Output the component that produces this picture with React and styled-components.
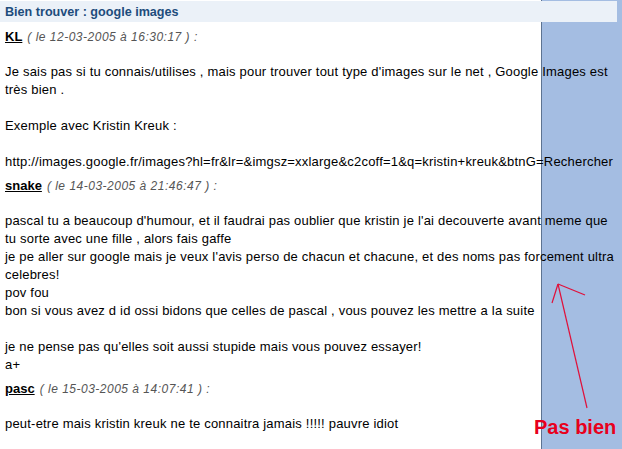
import React from 'react';
import styled, { createGlobalStyle } from 'styled-components';

const GlobalStyle = createGlobalStyle`
  html, body {
    margin: 0;
    padding: 0;
    background: #ffffff;
  }
`;

const Page = styled.div`
  position: relative;
  width: 622px;
  height: 449px;
  overflow: hidden;
  padding-top: 1px;
  box-sizing: border-box;
  background: linear-gradient(
    to right,
    #ffffff 0,
    #ffffff 541px,
    #5d7391 541px,
    #5d7391 542px,
    #a4bde2 542px
  );
  font-family: 'Liberation Sans', Arial, sans-serif;
  color: #000;
`;

const TitleBar = styled.div`
  width: 617px;
  height: 21px;
  background: #ebf1f8;
  box-sizing: border-box;
  padding-left: 5px;
  display: flex;
  align-items: center;
  font-size: 12.6px;
  font-weight: bold;
  color: #1d4c7c;
`;

const Post = styled.div`
  padding-left: 5px;
  margin-top: 5px;
`;

const Author = styled.div`
  height: 18px;
  line-height: 18px;
  white-space: nowrap;
`;

const Name = styled.span`
  font-size: 13px;
  font-weight: bold;
  text-decoration: underline;
  color: #000;
`;

const Date = styled.span`
  font-size: 12px;
  font-style: italic;
  letter-spacing: 0.5px;
  color: #555;
  margin-left: 5px;
`;

const Line = styled.div`
  height: 18px;
  line-height: 18px;
  font-size: 13px;
  letter-spacing: 0.2px;
  white-space: nowrap;
`;

const Overlay = styled.svg`
  position: absolute;
  left: 0;
  top: 0;
  pointer-events: none;
`;

const Label = styled.div`
  position: absolute;
  left: 534px;
  top: 416px;
  font-size: 20px;
  font-weight: bold;
  color: #e8001c;
  white-space: nowrap;
`;

const posts = [
  {
    name: 'KL',
    date: '( le 12-03-2005 à 16:30:17 ) :',
    lines: [
      '',
      "Je sais pas si tu connais/utilises , mais pour trouver tout type d'images sur le net , Google Images est",
      'très bien .',
      '',
      'Exemple avec Kristin Kreuk :',
      '',
      'http://images.google.fr/images?hl=fr&lr=&imgsz=xxlarge&c2coff=1&q=kristin+kreuk&btnG=Rechercher',
    ],
  },
  {
    name: 'snake',
    date: '( le 14-03-2005 à 21:46:47 ) :',
    lines: [
      '',
      "pascal tu a beaucoup d'humour, et il faudrai pas oublier que kristin je l'ai decouverte avant meme que",
      'tu sorte avec une fille , alors fais gaffe',
      "je pe aller sur google mais je veux l'avis perso de chacun et chacune, et des noms pas forcement ultra",
      'celebres!',
      'pov fou',
      'bon si vous avez d id ossi bidons que celles de pascal , vous pouvez les mettre a la suite',
      '',
      "je ne pense pas qu'elles soit aussi stupide mais vous pouvez essayer!",
      'a+',
    ],
  },
  {
    name: 'pasc',
    date: '( le 15-03-2005 à 14:07:41 ) :',
    lines: ['', 'peut-etre mais kristin kreuk ne te connaitra jamais !!!!! pauvre idiot'],
  },
];

export default function App() {
  return (
    <>
      <GlobalStyle />
      <Page>
        <TitleBar>Bien trouver : google images</TitleBar>
        {posts.map((p) => (
          <Post key={p.name}>
            <Author>
              <Name>{p.name}</Name>
              <Date>{p.date}</Date>
            </Author>
            {p.lines.map((l, i) => (
              <Line key={i}>{l || '\u00a0'}</Line>
            ))}
          </Post>
        ))}
        <Overlay width="622" height="449" viewBox="0 0 622 449">
          <g stroke="#e0103a" strokeWidth="1.2" fill="none">
            <line x1="558" y1="284" x2="587" y2="408" />
            <line x1="558" y1="284" x2="552" y2="303" />
            <line x1="558" y1="284" x2="585" y2="295" />
          </g>
        </Overlay>
        <Label>Pas bien</Label>
      </Page>
    </>
  );
}
